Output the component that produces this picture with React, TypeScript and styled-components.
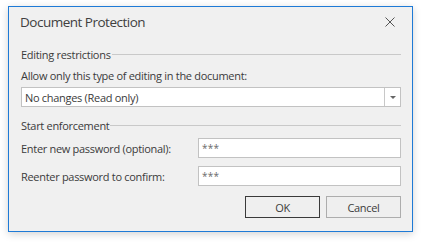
import React from "react";
import styled, { createGlobalStyle } from "styled-components";

const Global = createGlobalStyle`
  html, body { margin: 0; padding: 0; background: #ffffff; }
  body { width: 422px; height: 242px; overflow: hidden; font-family: "Open Sans", "Noto Sans", sans-serif; }
`;

const Page = styled.div`
  padding: 6px 9px 0 8px;
`;

const Window = styled.div`
  width: 403px;
  height: 224px;
  border: 1px solid #1e7ad6;
  background: #f0f0f0;
  box-shadow: 0 2px 8px rgba(0, 0, 0, 0.18);
  display: flex;
  flex-direction: column;
  color: #3b3b3b;
  font-size: 11px;
  letter-spacing: -0.3px;
`;

const TitleBar = styled.div`
  height: 29px;
  display: flex;
  align-items: center;
  justify-content: space-between;
  padding: 0 17px 0 11px;
`;

const Title = styled.div`
  font-size: 13.5px;
  color: #404040;
  letter-spacing: -0.5px;
`;

const Close = styled.svg`
  width: 10px;
  height: 10px;
  display: block;
`;

const Body = styled.div`
  padding: 0 11px 0 12px;
  display: flex;
  flex-direction: column;
`;

const GroupHeader = styled.div<{ $top: number }>`
  margin-top: ${(p) => p.$top}px;
  height: 16px;
  display: flex;
  align-items: center;
  gap: 1px;
  white-space: nowrap;
  &::after {
    content: "";
    flex: 1;
    height: 1px;
    background: #c9c9c9;
    margin-top: 1px;
  }
`;

const Label = styled.div`
  margin-top: 5px;
  height: 16px;
  display: flex;
  align-items: center;
`;

const Combo = styled.div`
  margin-top: 4px;
  height: 18px;
  border: 1px solid #c2c2c2;
  background: #ffffff;
  display: flex;
`;

const ComboText = styled.div`
  flex: 1;
  padding-left: 3px;
  display: flex;
  align-items: center;
`;

const ComboButton = styled.div`
  width: 15px;
  border-left: 1px solid #c8c8c8;
  background: #ffffff;
  display: flex;
  align-items: center;
  justify-content: center;
`;

const Row = styled.div<{ $top: number }>`
  margin-top: ${(p) => p.$top}px;
  height: 20px;
  display: grid;
  grid-template-columns: 177px 1fr;
  align-items: center;
`;

const Input = styled.div`
  height: 18px;
  border: 1px solid #c2c2c2;
  background: #ffffff;
  padding-left: 3px;
  display: flex;
  align-items: center;
  color: #6a6a6a;
  font-size: 10px;
  letter-spacing: 0.3px;
`;

const Buttons = styled.div`
  margin-top: 10px;
  display: flex;
  justify-content: flex-end;
  gap: 6px;
`;

const Button = styled.div<{ $default?: boolean }>`
  width: 73px;
  height: 20px;
  border: 1px solid ${(p) => (p.$default ? "#3a3a3a" : "#adadad")};
  background: #efefef;
  display: flex;
  align-items: center;
  justify-content: center;
`;

export default function App() {
  return (
    <>
      <Global />
      <Page>
        <Window>
          <TitleBar>
            <Title>Document Protection</Title>
            <Close viewBox="0 0 10 10">
              <path d="M0.5 0.5 L9.5 9.5 M9.5 0.5 L0.5 9.5" stroke="#555" strokeWidth="1" fill="none" />
            </Close>
          </TitleBar>
          <Body>
            <GroupHeader $top={10}>Editing restrictions</GroupHeader>
            <Label>Allow only this type of editing in the document:</Label>
            <Combo>
              <ComboText>No changes (Read only)</ComboText>
              <ComboButton>
                <svg width="6" height="3" viewBox="0 0 6 3">
                  <path d="M0 0 H6 L3 3 Z" fill="#666" />
                </svg>
              </ComboButton>
            </Combo>
            <GroupHeader $top={10}>Start enforcement</GroupHeader>
            <Row $top={5}>
              <span>Enter new password (optional):</span>
              <Input>***</Input>
            </Row>
            <Row $top={8}>
              <span>Reenter password to confirm:</span>
              <Input>***</Input>
            </Row>
            <Buttons>
              <Button $default>OK</Button>
              <Button>Cancel</Button>
            </Buttons>
          </Body>
        </Window>
      </Page>
    </>
  );
}
